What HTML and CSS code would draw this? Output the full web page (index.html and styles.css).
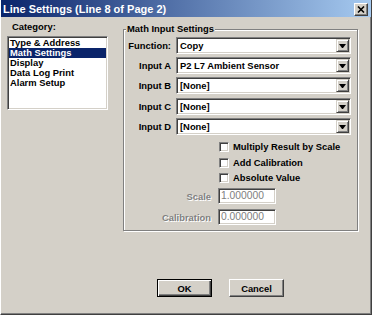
FILE: index.html
```html
<!DOCTYPE html>
<html lang="en">
<head>
    <meta charset="UTF-8">
    <title>Line Settings</title>
    <link rel="stylesheet" href="styles.css">
</head>
<body>
    <div class="window">
        <div class="titlebar">
            <span class="title">Line Settings (Line 8 of Page 2)</span>
            <span class="close">
                <svg width="8" height="7" viewBox="0 0 8 7"><path d="M1 0.5 L7 6.5 M7 0.5 L1 6.5" stroke="#000" stroke-width="1.6" fill="none"/></svg>
            </span>
        </div>

        <div class="content">
            <div class="category">
                <div class="cat-label">Category:</div>
                <ul class="listbox">
                    <li>Type &amp; Address</li>
                    <li class="selected">Math Settings</li>
                    <li>Display</li>
                    <li>Data Log Print</li>
                    <li>Alarm Setup</li>
                </ul>
            </div>

            <div class="group">
                <div class="group-title">Math Input Settings</div>

                <div class="field">
                    <label>Function:</label>
                    <div class="combo"><span class="combo-text">Copy</span><span class="drop"></span></div>
                </div>
                <div class="field">
                    <label>Input A</label>
                    <div class="combo"><span class="combo-text">P2 L7 Ambient Sensor</span><span class="drop"></span></div>
                </div>
                <div class="field">
                    <label>Input B</label>
                    <div class="combo"><span class="combo-text">[None]</span><span class="drop"></span></div>
                </div>
                <div class="field wide">
                    <label>Input C</label>
                    <div class="combo"><span class="combo-text">[None]</span><span class="drop"></span></div>
                </div>
                <div class="field">
                    <label>Input D</label>
                    <div class="combo"><span class="combo-text">[None]</span><span class="drop"></span></div>
                </div>

                <div class="checks">
                    <div class="check"><span class="box"></span>Multiply Result by Scale</div>
                    <div class="check"><span class="box"></span>Add Calibration</div>
                    <div class="check"><span class="box"></span>Absolute Value</div>
                </div>

                <div class="num-field">
                    <label>Scale</label>
                    <div class="edit">1.000000</div>
                </div>
                <div class="num-field">
                    <label>Calibration</label>
                    <div class="edit">0.000000</div>
                </div>
            </div>
        </div>

        <div class="footer">
            <button class="btn default">OK</button>
            <button class="btn">Cancel</button>
        </div>
    </div>
</body>
</html>
```

FILE: styles.css
```css
body {
    margin: 0;
    background: #d4d0c8;
}
.window {
    width: 372px;
    height: 315px;
    box-sizing: border-box;
    background: #d4d0c8;
    border-left: 1px solid #fff;
    border-right: 1px solid #404040;
    border-bottom: 1px solid #404040;
    box-shadow: inset -1px -1px #808080;
    display: flex;
    flex-direction: column;
    font-family: "Liberation Sans", Arial, sans-serif;
    font-size: 9.4px;
    font-weight: bold;
    color: #000;
}
.titlebar {
    height: 17px;
    flex: none;
    display: flex;
    align-items: center;
    background: linear-gradient(to right, #0a246a, #a6caf0);
}
.title {
    flex: 1;
    padding: 2px 0 0 2px;
    color: #fff;
    font-family: "Liberation Sans Narrow", "Liberation Sans", Arial, sans-serif;
    font-size: 11px;
    line-height: 15px;
    white-space: nowrap;
}
.close {
    width: 14px;
    height: 13px;
    margin: 1px 3px 0 0;
    box-sizing: border-box;
    background: #d4d0c8;
    border: 1px solid;
    border-color: #fff #404040 #404040 #fff;
    box-shadow: inset -1px -1px #808080;
    display: flex;
    align-items: center;
    justify-content: center;
}
.close svg {
    display: block;
}
.content {
    display: flex;
    padding-left: 6px;
}
.category {
    width: 101px;
    padding-top: 4px;
}
.cat-label {
    line-height: 11px;
    margin-left: 5px;
}
.listbox {
    list-style: none;
    margin: 4px 0 0;
    padding: 1px;
    height: 74px;
    box-sizing: border-box;
    background: #fff;
    border: 1px solid;
    border-color: #808080 #fff #fff #808080;
    box-shadow: inset 1px 1px #404040, inset -1px -1px #d4d0c8;
}
.listbox li {
    line-height: 10px;
    padding-left: 1px;
    white-space: nowrap;
}
.listbox li.selected {
    background: #0a246a;
    color: #fff;
}
.group {
    width: 235px;
    height: 202px;
    box-sizing: border-box;
    margin: 12px 0 0 15px;
    border: 1px solid #808080;
    box-shadow: 1px 1px 0 #fff, inset 1px 1px 0 #fff;
}
.group-title {
    width: fit-content;
    margin: -7px 0 0 2px;
    padding: 0 1px;
    line-height: 11px;
    background: #d4d0c8;
}
.field {
    display: flex;
    align-items: center;
    height: 17px;
    margin-top: 3px;
}
.field.wide {
    margin-top: 4px;
}
.field label {
    width: 47px;
    margin-right: 5px;
    text-align: right;
    white-space: nowrap;
}
.combo {
    width: 175px;
    height: 17px;
    box-sizing: border-box;
    background: #fff;
    border: 1px solid;
    border-color: #808080 #fff #fff #808080;
    box-shadow: inset 1px 1px #404040, inset -1px -1px #d4d0c8;
    padding: 1px;
    display: flex;
    align-items: center;
}
.combo-text {
    flex: 1;
    padding-left: 2px;
    line-height: 13px;
    white-space: nowrap;
}
.drop {
    width: 13px;
    height: 13px;
    box-sizing: border-box;
    background: #d4d0c8;
    border: 1px solid;
    border-color: #d4d0c8 #404040 #404040 #d4d0c8;
    box-shadow: inset 1px 1px #fff, inset -1px -1px #808080;
    display: flex;
    align-items: center;
    justify-content: center;
}
.drop::after {
    content: "";
    width: 1px;
    height: 0;
    border-top: 4px solid #000;
    border-left: 3px solid transparent;
    border-right: 3px solid transparent;
}
.checks {
    margin: 7px 0 0 95px;
    display: flex;
    flex-direction: column;
    gap: 5.5px;
}
.check {
    display: flex;
    align-items: center;
    gap: 4px;
    height: 10px;
    line-height: 10px;
    white-space: nowrap;
}
.box {
    width: 10px;
    height: 10px;
    box-sizing: border-box;
    background: #fff;
    border: 1px solid;
    border-color: #808080 #fff #fff #808080;
    box-shadow: inset 1px 1px #404040, inset -1px -1px #d4d0c8;
}
.num-field {
    display: flex;
    align-items: center;
    margin-top: 5px;
}
.num-field label {
    width: 87px;
    margin-right: 7px;
    text-align: right;
    color: #808080;
    text-shadow: 1px 1px 0 #fff;
}
.edit {
    width: 58px;
    height: 16px;
    box-sizing: border-box;
    background: #fff;
    border: 1px solid;
    border-color: #808080 #fff #fff #808080;
    box-shadow: inset 1px 1px #404040, inset -1px -1px #d4d0c8;
    padding: 1px 0 0 2px;
    font-weight: normal;
    font-size: 10.3px;
    line-height: 12px;
    color: #808080;
}
.footer {
    display: flex;
    gap: 17px;
    margin-top: 48px;
    padding-left: 156px;
}
.btn {
    width: 55px;
    height: 18px;
    padding: 0;
    box-sizing: border-box;
    background: #d4d0c8;
    border: 1px solid;
    border-color: #fff #404040 #404040 #fff;
    box-shadow: inset -1px -1px #808080;
    font-family: inherit;
    font-size: 9.4px;
    font-weight: bold;
    color: #000;
}
.btn.default {
    border-color: #000;
    box-shadow: inset 1px 1px #fff, inset -1px -1px #404040, inset -2px -2px #808080;
}
```
